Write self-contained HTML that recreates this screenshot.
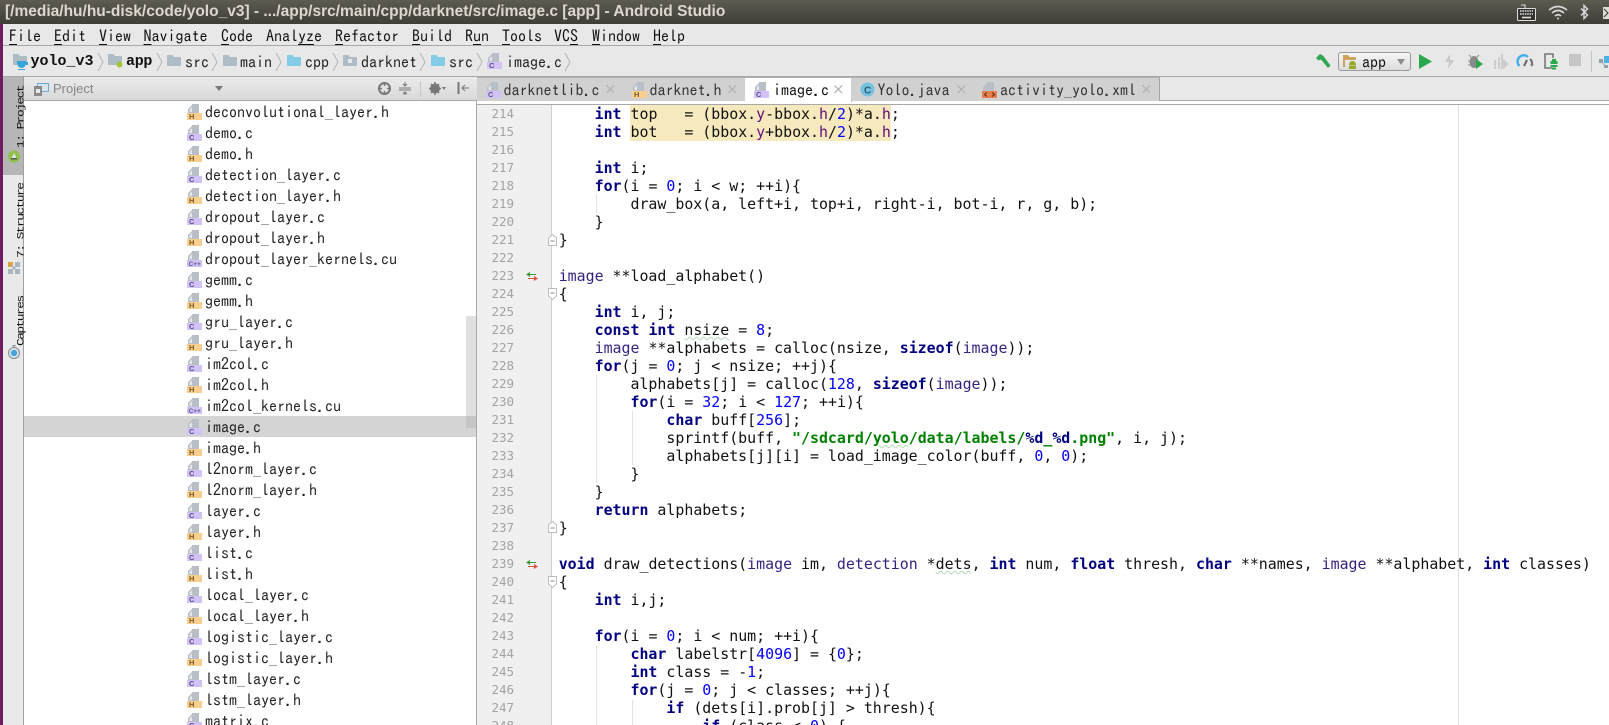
<!DOCTYPE html>
<html><head><meta charset="utf-8"><style>
html,body{margin:0;padding:0;width:1609px;height:725px;overflow:hidden;background:#fff}
body{position:relative;font-family:"IPAGothic","Liberation Mono",monospace;font-size:16px;color:#000}
.a,.a *{box-sizing:border-box}
.a{position:absolute}
.t{position:absolute;white-space:pre;line-height:20px;width:auto;letter-spacing:0}
.m{position:absolute;top:26px;line-height:20px;white-space:pre;font-size:16px;color:#111}
.m u{text-underline-offset:2px}
.b{position:absolute;top:51px;line-height:22px;white-space:pre;font-size:16px;color:#222}
svg{position:absolute;overflow:visible}
.tab{position:absolute;top:77px;height:23px;background:#d1d1d1;border-right:1px solid #a5a5a5;border-top:1px solid #b0b0b0}
.tt{position:absolute;top:80px;line-height:20px;white-space:pre;font-size:16px;color:#333}
.x{position:absolute;top:81px;font:15px/16px "DejaVu Sans",sans-serif;color:#b4b4b4}
#tree{position:absolute;left:24px;top:101px;width:452px;height:624px;overflow:hidden}
.r{position:absolute;left:181px;height:21px;line-height:23px;white-space:pre;font-size:16px;color:#222}
pre{margin:0;position:absolute;font-family:"DejaVu Sans Mono",monospace;line-height:18px}
#code{left:558.7px;top:105px;font-size:14.92px;color:#111;width:1040px;height:620px;overflow:hidden}
#nums{left:491.5px;top:105px;font-size:12.5px;color:#a3a3a3;height:620px;overflow:hidden}
b{color:#000080;font-weight:bold}
i{font-style:normal;color:#371f80}
em{font-style:normal;color:#660e7a}
s{text-decoration:none;color:#0000ff}
q{quotes:none;color:#008000;font-weight:bold}
q b{color:#000080}
.w{text-decoration:underline wavy #b6d8b6 1px;text-underline-offset:1px}
.g{position:absolute;width:1px;background:#e2e2e2}
.v{position:absolute;white-space:pre;font:13px/10px "Liberation Mono",monospace;letter-spacing:-1.6px;color:#111;transform-origin:0 0;transform:rotate(-90deg) scaleY(.8)}
</style></head><body>
<svg width="0" height="0" style="left:0;top:0">
<defs>
<symbol id="h" viewBox="0 0 15 16"><path d="M1 9V5L5 1V0H12V9z" fill="#b8bfc7"/><path d="M2.500 8V5.500L5 3V8z" fill="#e4e6e9"/><rect x="0" y="9" width="15" height="7" fill="#f9cf8e"/><text x="2" y="15" font-family="Liberation Sans" font-weight="bold" font-size="7.500" fill="#7a5a28">H</text></symbol>
<symbol id="c" viewBox="0 0 15 16"><path d="M1 9V5L5 1V0H12V9z" fill="#b8bfc7"/><path d="M2.500 8V5.500L5 3V8z" fill="#e4e6e9"/><rect x="0" y="9" width="15" height="7" fill="#d3c2f6"/><text x="2" y="15" font-family="Liberation Sans" font-weight="bold" font-size="7.500" fill="#5d5088">C</text></symbol>
<symbol id="p" viewBox="0 0 15 16"><path d="M1 9V5L5 1V0H12V9z" fill="#b8bfc7"/><path d="M2.500 8V5.500L5 3V8z" fill="#e4e6e9"/><rect x="0" y="9" width="15" height="7" fill="#d3c2f6"/><text x="1.500" y="15" font-family="Liberation Sans" font-weight="bold" font-size="6.500" fill="#5d5088">C++</text></symbol>
<symbol id="f" viewBox="0 0 14 11"><path d="M0 0H5.500L7 2H14V11H0z"/></symbol>
<symbol id="ov" viewBox="0 0 12 9"><path d="M4 0L0 2.500L4 5V3H10V2H4z" fill="#3a9a3f"/><path d="M8 4L12 6.500L8 9V7H2V6H8z" fill="#d9543f"/></symbol>
</defs></svg>

<!-- title bar -->
<div class="a" style="left:0;top:0;width:1609px;height:24px;background:linear-gradient(#5e5b50,#3e3d37)"></div>
<div class="t" style="left:5px;top:2px;font:bold 15.5px/20px 'Liberation Sans',sans-serif;color:#dcd8cf">[/media/hu/hu-disk/code/yolo_v3] - .../app/src/main/cpp/darknet/src/image.c [app] - Android Studio</div>
<svg style="left:1517px;top:3px" width="19" height="19" viewBox="0 0 19 19"><path d="M8 5V2H4" fill="none" stroke="#ddd" stroke-width="1"/><rect x=".5" y="5.500" width="18" height="12" rx="1" fill="#35342f" stroke="#ddd"/><path d="M3 8h13M3 11h13" stroke="#ddd" stroke-width="1.600" stroke-dasharray="1.600 .8"/><path d="M5 14.500h9" stroke="#ddd" stroke-width="1.600"/></svg>
<svg style="left:1548px;top:5px" width="20" height="15" viewBox="0 0 20 15" fill="none" stroke="#d8d8d8" stroke-width="1.600"><path d="M1 5Q10 -2 19 5"/><path d="M4 8Q10 3 16 8"/><path d="M7 11Q10 8.500 13 11"/><circle cx="10" cy="13.500" r="1" fill="#d8d8d8" stroke="none"/></svg>
<svg style="left:1580px;top:4px" width="9" height="16" viewBox="0 0 9 16" fill="none" stroke="#dcdcdc" stroke-width="1.400"><path d="M1 4.500L7.500 11L4 14.500V1.500L7.500 5L1 11.500"/></svg>
<div class="a" style="left:1603px;top:7px;width:6px;height:12px;background:#e0ddd5"></div>
<svg style="left:1603px;top:7px" width="6" height="12"><path d="M1 2L5 6L1 10" fill="none" stroke="#333"/></svg>

<!-- menu -->
<div class="a" style="left:0;top:24px;width:1609px;height:22px;background:#e8e8e8;border-bottom:1px solid #a8a8a8"></div>
<div class="a" style="left:0;top:24px;width:3px;height:701px;background:#6d1b62"></div>
<div class="m" style="left:9px"><u>F</u>ile</div>
<div class="m" style="left:54px"><u>E</u>dit</div>
<div class="m" style="left:99px"><u>V</u>iew</div>
<div class="m" style="left:143.500px"><u>N</u>avigate</div>
<div class="m" style="left:221px"><u>C</u>ode</div>
<div class="m" style="left:266px">Anal<u>y</u><u>z</u>e</div>
<div class="m" style="left:335px"><u>R</u>efactor</div>
<div class="m" style="left:412px"><u>B</u>uild</div>
<div class="m" style="left:465px">R<u>u</u>n</div>
<div class="m" style="left:502px"><u>T</u>ools</div>
<div class="m" style="left:554px">VC<u>S</u></div>
<div class="m" style="left:592px"><u>W</u>indow</div>
<div class="m" style="left:653px"><u>H</u>elp</div>

<!-- breadcrumb -->
<div class="a" style="left:3px;top:46px;width:1606px;height:31px;background:#e8e8e8;border-bottom:1px solid #a8a8a8"></div>
<svg style="left:13px;top:54px" width="14" height="11"><use href="#f" width="14" height="11" fill="#aebcc6"/></svg>
<svg style="left:17px;top:61px" width="11" height="9" viewBox="0 0 11 9"><path d="M0 0H9V1H11V4H8.500Q7.500 7 4.500 7T0 3z M1 8H8V9H1z" fill="#3aa5d8"/></svg>
<div class="b" style="left:30.500px;font:bold 15px/22px 'Liberation Mono',monospace;color:#111">yolo_v3</div>
<svg style="left:97px;top:52px" width="7" height="20" fill="none" stroke="#b4b4b4"><path d="M1 1L6 10L1 19"/></svg>
<svg style="left:108px;top:54px" width="14" height="11"><use href="#f" width="14" height="11" fill="#aebcc6"/></svg>
<svg style="left:116px;top:61px" width="7" height="7"><circle cx="3.500" cy="3.500" r="3" fill="#a5c63a"/></svg>
<div class="b" style="left:126px;font:bold 15px/22px 'Liberation Mono',monospace;color:#111;letter-spacing:-.3px">app</div>
<svg style="left:156px;top:52px" width="7" height="20" fill="none" stroke="#b4b4b4"><path d="M1 1L6 10L1 19"/></svg>
<svg style="left:167px;top:55px" width="14" height="11"><use href="#f" width="14" height="11" fill="#aebcc6"/></svg>
<div class="b" style="left:185px">src</div>
<svg style="left:211px;top:52px" width="7" height="20" fill="none" stroke="#b4b4b4"><path d="M1 1L6 10L1 19"/></svg>
<svg style="left:223px;top:55px" width="14" height="11"><use href="#f" width="14" height="11" fill="#aebcc6"/></svg>
<div class="b" style="left:240px">main</div>
<svg style="left:275px;top:52px" width="7" height="20" fill="none" stroke="#b4b4b4"><path d="M1 1L6 10L1 19"/></svg>
<svg style="left:287px;top:55px" width="14" height="11"><use href="#f" width="14" height="11" fill="#84cbe6"/></svg>
<div class="b" style="left:305px">cpp</div>
<svg style="left:332px;top:52px" width="7" height="20" fill="none" stroke="#b4b4b4"><path d="M1 1L6 10L1 19"/></svg>
<svg style="left:343px;top:55px" width="14" height="11"><use href="#f" width="14" height="11" fill="#aebcc6"/><rect x="5" y="4" width="4" height="4" fill="#e8e8e8"/></svg>
<div class="b" style="left:361px">darknet</div>
<svg style="left:419px;top:52px" width="7" height="20" fill="none" stroke="#b4b4b4"><path d="M1 1L6 10L1 19"/></svg>
<svg style="left:431px;top:55px" width="14" height="11"><use href="#f" width="14" height="11" fill="#84cbe6"/></svg>
<div class="b" style="left:449px">src</div>
<svg style="left:476px;top:52px" width="7" height="20" fill="none" stroke="#b4b4b4"><path d="M1 1L6 10L1 19"/></svg>
<svg style="left:487px;top:53px" width="15" height="16"><use href="#c" width="15" height="16"/></svg>
<div class="b" style="left:506px">image.c</div>
<svg style="left:564px;top:52px" width="7" height="20" fill="none" stroke="#b4b4b4"><path d="M1 1L6 10L1 19"/></svg>

<!-- run toolbar -->
<svg style="left:1316px;top:54px" width="15" height="15" viewBox="0 0 15 15"><path d="M0 4L4 0L7 1.500L14.500 11.500L12 14L5 5.500L2.500 6.500z" fill="#2fa84f"/></svg>
<div class="a" style="left:1338px;top:52px;width:73px;height:19px;border:1px solid #9a9a9a;border-radius:3px;background:linear-gradient(#f6f6f6,#dcdcdc)"></div>
<svg style="left:1343px;top:55px" width="17" height="14" viewBox="0 0 17 14"><path d="M0 0H5L6.500 2H13V5H2V12H0z" fill="#d2a15e"/><path d="M6 9.500a3.500 3.500 0 0 1 7 0V10H6z M6 10.500h7V14H6z" fill="#98a72a"/></svg>
<div class="b" style="left:1362px;top:51px;color:#111">app</div>
<svg style="left:1396px;top:59px" width="10" height="6"><path d="M1 0H9L5 6z" fill="#8c8c8c"/></svg>
<svg style="left:1419px;top:54px" width="13" height="15"><path d="M0 0L13 7.500L0 15z" fill="#2aa84e"/></svg>
<svg style="left:1445px;top:54px" width="9" height="15"><path d="M5 0L0 8H4L3 15L9 6H5z" fill="#c8c8c8"/></svg>
<svg style="left:1468px;top:54px" width="15" height="15" viewBox="0 0 15 15"><path d="M3 3L1 1M9 3L11 1M0 7H2M0 11H2" stroke="#8a8a8a" fill="none"/><ellipse cx="6" cy="8" rx="4.500" ry="6" fill="#8a8a8a"/><path d="M8 5L15 10L8 15z" fill="#2aa84e"/></svg>
<svg style="left:1494px;top:54px" width="15" height="15"><path d="M0 6H2V15H0zM4 3H6V15H4zM7 0H9V15H7z" fill="#cdcdcd"/><path d="M9 5L15 10L9 15z" fill="#cdcdcd"/></svg>
<svg style="left:1518px;top:55px" width="15" height="12" fill="none"><path d="M1.500 11A6 6 0 0 1 10 2" stroke="#45aee8" stroke-width="2.400"/><path d="M12 4A6 6 0 0 1 13.500 11" stroke="#777" stroke-width="2.400"/><path d="M6 11L9 5" stroke="#666" stroke-width="2"/></svg>
<svg style="left:1544px;top:53px" width="14" height="17" fill="none"><path d="M8 15H1V1H9V5" stroke="#777" stroke-width="1.600"/><path d="M6.500 8h7v3h-7zM6.500 12h7v2h-7zM8 14.500h4v2H8zM8 6h4v2H8z" fill="#2aa84e"/></svg>
<div class="a" style="left:1569px;top:54px;width:12px;height:12px;background:#c6c6c6"></div>
<div class="a" style="left:1591px;top:51px;width:1px;height:21px;background:#c4c4c4"></div>
<svg style="left:1599px;top:55px" width="10" height="13"><path d="M0 4H4V8H0z" fill="#8ea2ad"/><path d="M5 1H10V8H5z" fill="#4db3e6"/><path d="M5 10H9V13H5z" fill="#8ea2ad"/><path d="M3 7L6 11" stroke="#8ea2ad"/></svg>

<!-- left strip -->
<div class="a" style="left:3px;top:77px;width:21px;height:648px;background:#e9e9e9;border-right:1px solid #a0a0a0"></div>
<div class="a" style="left:3px;top:77px;width:20px;height:98px;background:#b6b6b6"></div>
<div class="v" style="left:17px;top:148px">1: Project</div>
<div class="v" style="left:17px;top:258px">7: Structure</div>
<div class="v" style="left:17px;top:346px">Captures</div>
<svg style="left:8px;top:150px" width="12" height="13" viewBox="0 0 12 13"><circle cx="6" cy="6.500" r="6" fill="#8fc04a"/><path d="M3 9L6 3L9 9z" fill="#e4e4e4"/><rect x="3" y="8" width="6" height="1.500" fill="#555"/></svg>
<svg style="left:8px;top:262px" width="12" height="12" viewBox="0 0 12 12"><rect width="5" height="5" fill="#e0a23c"/><rect x="7" width="5" height="5" fill="#aab5bd"/><rect y="7" width="5" height="5" fill="#aab5bd"/><rect x="7" y="7" width="5" height="5" fill="#aab5bd"/><path d="M3 3L9 9M9 3L3 9" stroke="#aab5bd" stroke-width="1.500"/></svg>
<svg style="left:8px;top:345px" width="12" height="14" viewBox="0 0 12 14"><circle cx="6" cy="8" r="5.500" fill="#dde8ee" stroke="#888"/><circle cx="6" cy="8" r="3.200" fill="#4aa3d8"/><path d="M4.500 0H7.500V1.500H4.500z" fill="#888"/></svg>

<!-- project header -->
<div class="a" style="left:24px;top:77px;width:453px;height:24px;background:linear-gradient(#ebebeb,#d9d9d9);border-bottom:1px solid #a8a8a8"></div>
<svg style="left:34px;top:83px" width="15" height="13" viewBox="0 0 15 13"><rect x="3.500" y=".5" width="11" height="8" fill="#d5e6f1" stroke="#6ea9cf"/><rect x="0" y="3" width="8" height="10" fill="#8a8a8a"/><rect x="2" y="6" width="4" height="4" fill="#e8e8e8"/></svg>
<div class="t" style="left:53px;top:79px;color:#858585;font:13px/20px 'Liberation Sans',sans-serif">Project</div>
<svg style="left:215px;top:86px" width="8" height="5"><path d="M0 0H8L4 5z" fill="#777"/></svg>
<svg style="left:378px;top:82px" width="13" height="13" viewBox="0 0 13 13"><circle cx="6.500" cy="6.500" r="5.500" fill="none" stroke="#777" stroke-width="2"/><path d="M6.500 0V4M6.500 9V13M0 6.500H4M9 6.500H13" stroke="#777" stroke-width="1.500"/></svg>
<svg style="left:399px;top:82px" width="12" height="13" stroke="#777" fill="none"><path d="M0 6H12M0 8H12M6 0V4M4 2L6 4L8 2M6 13V10M4 12L6 10L8 12"/></svg>
<div class="a" style="left:420px;top:81px;width:1px;height:16px;background:#c8c8c8"></div>
<svg style="left:429px;top:82px" width="17" height="13" viewBox="0 0 17 13"><circle cx="6" cy="6.500" r="3.500" fill="none" stroke="#777" stroke-width="3"/><path d="M6 0V13M0 6.500H12M2 2L10 11M10 2L2 11" stroke="#777" stroke-width="1.500"/><path d="M13 5H17L15 8z" fill="#777"/></svg>
<svg style="left:457px;top:82px" width="12" height="13" stroke="#777" fill="none"><path d="M1 0V12M2 0V12M12 6H5M8 3L5 6L8 9"/></svg>

<!-- tabs -->
<div class="a" style="left:477px;top:77px;width:1132px;height:24px;background:#e8e8e8;border-bottom:1px solid #a8a8a8"></div>
<div class="tab" style="left:477px;width:146px"></div>
<div class="tab" style="left:623px;width:122px"></div>
<div class="tab" style="left:745px;width:106px;background:#fff;height:24px"></div>
<div class="tab" style="left:851px;width:122px"></div>
<div class="tab" style="left:973px;width:186px"></div>
<svg style="left:486px;top:82px" width="15" height="16"><use href="#c" width="15" height="16"/></svg>
<div class="tt" style="left:503.500px">darknetlib.c</div><div class="x" style="left:604px">×</div>
<svg style="left:632px;top:82px" width="15" height="16"><use href="#h" width="15" height="16"/></svg>
<div class="tt" style="left:649.500px">darknet.h</div><div class="x" style="left:726px">×</div>
<svg style="left:754px;top:82px" width="15" height="16"><use href="#c" width="15" height="16"/></svg>
<div class="tt" style="left:773px;color:#111">image.c</div><div class="x" style="left:832px">×</div>
<svg style="left:860px;top:82px" width="15" height="15"><circle cx="7.500" cy="7.500" r="7" fill="#76c1e0"/><text x="4" y="11.500" font-family="Liberation Sans" font-weight="bold" font-size="10" fill="#2b5d75">C</text></svg>
<div class="tt" style="left:877.500px">Yolo.java</div><div class="x" style="left:955px">×</div>
<svg style="left:982px;top:82px" width="15" height="16" viewBox="0 0 15 16"><path d="M1 9V5L5 1V0H12V9z" fill="#b8bfc7"/><rect y="9" width="15" height="7" fill="#e67f4d"/><path d="M5 10.500L2.500 12.500L5 14.500M10 10.500L12.500 12.500L10 14.500" stroke="#5a2a10" fill="none"/></svg>
<div class="tt" style="left:1000px">activity_yolo.xml</div><div class="x" style="left:1140px">×</div>

<!-- tree -->
<div class="a" style="left:466px;top:316px;width:10px;height:112px;background:#e0e0e0"></div>
<div class="a" style="left:24px;top:416px;width:452px;height:21px;background:#d4d4d4"></div>
<div class="a" style="left:466px;top:416px;width:10px;height:12px;background:#c6c6c6"></div>
<div class="a" style="left:476px;top:101px;width:1px;height:624px;background:#a8a8a8"></div>
<div id="tree">
<svg style="left:163px;top:3px" width="15" height="16"><use href="#h" width="15" height="16"/></svg><div class="r" style="top:0">deconvolutional_layer.h</div>
<svg style="left:163px;top:24px" width="15" height="16"><use href="#c" width="15" height="16"/></svg><div class="r" style="top:21px">demo.c</div>
<svg style="left:163px;top:45px" width="15" height="16"><use href="#h" width="15" height="16"/></svg><div class="r" style="top:42px">demo.h</div>
<svg style="left:163px;top:66px" width="15" height="16"><use href="#c" width="15" height="16"/></svg><div class="r" style="top:63px">detection_layer.c</div>
<svg style="left:163px;top:87px" width="15" height="16"><use href="#h" width="15" height="16"/></svg><div class="r" style="top:84px">detection_layer.h</div>
<svg style="left:163px;top:108px" width="15" height="16"><use href="#c" width="15" height="16"/></svg><div class="r" style="top:105px">dropout_layer.c</div>
<svg style="left:163px;top:129px" width="15" height="16"><use href="#h" width="15" height="16"/></svg><div class="r" style="top:126px">dropout_layer.h</div>
<svg style="left:163px;top:150px" width="15" height="16"><use href="#p" width="15" height="16"/></svg><div class="r" style="top:147px">dropout_layer_kernels.cu</div>
<svg style="left:163px;top:171px" width="15" height="16"><use href="#c" width="15" height="16"/></svg><div class="r" style="top:168px">gemm.c</div>
<svg style="left:163px;top:192px" width="15" height="16"><use href="#h" width="15" height="16"/></svg><div class="r" style="top:189px">gemm.h</div>
<svg style="left:163px;top:213px" width="15" height="16"><use href="#c" width="15" height="16"/></svg><div class="r" style="top:210px">gru_layer.c</div>
<svg style="left:163px;top:234px" width="15" height="16"><use href="#h" width="15" height="16"/></svg><div class="r" style="top:231px">gru_layer.h</div>
<svg style="left:163px;top:255px" width="15" height="16"><use href="#c" width="15" height="16"/></svg><div class="r" style="top:252px">im2col.c</div>
<svg style="left:163px;top:276px" width="15" height="16"><use href="#h" width="15" height="16"/></svg><div class="r" style="top:273px">im2col.h</div>
<svg style="left:163px;top:297px" width="15" height="16"><use href="#p" width="15" height="16"/></svg><div class="r" style="top:294px">im2col_kernels.cu</div>
<svg style="left:163px;top:318px" width="15" height="16"><use href="#c" width="15" height="16"/></svg><div class="r" style="top:315px">image.c</div>
<svg style="left:163px;top:339px" width="15" height="16"><use href="#h" width="15" height="16"/></svg><div class="r" style="top:336px">image.h</div>
<svg style="left:163px;top:360px" width="15" height="16"><use href="#c" width="15" height="16"/></svg><div class="r" style="top:357px">l2norm_layer.c</div>
<svg style="left:163px;top:381px" width="15" height="16"><use href="#h" width="15" height="16"/></svg><div class="r" style="top:378px">l2norm_layer.h</div>
<svg style="left:163px;top:402px" width="15" height="16"><use href="#c" width="15" height="16"/></svg><div class="r" style="top:399px">layer.c</div>
<svg style="left:163px;top:423px" width="15" height="16"><use href="#h" width="15" height="16"/></svg><div class="r" style="top:420px">layer.h</div>
<svg style="left:163px;top:444px" width="15" height="16"><use href="#c" width="15" height="16"/></svg><div class="r" style="top:441px">list.c</div>
<svg style="left:163px;top:465px" width="15" height="16"><use href="#h" width="15" height="16"/></svg><div class="r" style="top:462px">list.h</div>
<svg style="left:163px;top:486px" width="15" height="16"><use href="#c" width="15" height="16"/></svg><div class="r" style="top:483px">local_layer.c</div>
<svg style="left:163px;top:507px" width="15" height="16"><use href="#h" width="15" height="16"/></svg><div class="r" style="top:504px">local_layer.h</div>
<svg style="left:163px;top:528px" width="15" height="16"><use href="#c" width="15" height="16"/></svg><div class="r" style="top:525px">logistic_layer.c</div>
<svg style="left:163px;top:549px" width="15" height="16"><use href="#h" width="15" height="16"/></svg><div class="r" style="top:546px">logistic_layer.h</div>
<svg style="left:163px;top:570px" width="15" height="16"><use href="#c" width="15" height="16"/></svg><div class="r" style="top:567px">lstm_layer.c</div>
<svg style="left:163px;top:591px" width="15" height="16"><use href="#h" width="15" height="16"/></svg><div class="r" style="top:588px">lstm_layer.h</div>
<svg style="left:163px;top:612px" width="15" height="16"><use href="#c" width="15" height="16"/></svg><div class="r" style="top:609px">matrix.c</div>
</div>

<!-- editor -->
<div class="a" style="left:477px;top:104px;width:1132px;height:1px;background:#a8a8a8"></div>
<div class="a" style="left:477px;top:105px;width:75px;height:620px;background:#f0f0f0;border-right:1px solid #d0d0d0"></div>
<div class="a" style="left:1458px;top:105px;width:1px;height:620px;background:#e2e2e2"></div>
<div class="a" style="left:630px;top:105px;width:261px;height:36px;background:#f5e9bd"></div>
<div class="g" style="left:596px;top:195px;height:18px"></div>
<div class="g" style="left:596px;top:375px;height:108px"></div>
<div class="g" style="left:632px;top:411px;height:54px"></div>
<div class="g" style="left:596px;top:646px;height:79px"></div>
<div class="g" style="left:632px;top:700px;height:25px"></div>
<pre id="nums">214
215
216
217
218
219
220
221
222
223
224
225
226
227
228
229
230
231
232
233
234
235
236
237
238
239
240
241
242
243
244
245
246
247
248</pre>
<svg style="left:526px;top:272px" width="12" height="9"><use href="#ov" width="12" height="9"/></svg>
<svg style="left:526px;top:560px" width="12" height="9"><use href="#ov" width="12" height="9"/></svg>
<svg style="left:548px;top:234px" width="9" height="12" fill="#fff" stroke="#bdbdbd"><path d="M.5 11.500V4L4.500 .5L8.500 4V11.500z"/><path d="M2.500 7H6.500" stroke="#888"/></svg>
<svg style="left:548px;top:288px" width="9" height="12" fill="#fff" stroke="#bdbdbd"><path d="M.5 .5V8L4.500 11.500L8.500 8V.5z"/><path d="M2.500 5H6.500" stroke="#888"/></svg>
<svg style="left:548px;top:521px" width="9" height="12" fill="#fff" stroke="#bdbdbd"><path d="M.5 11.500V4L4.500 .5L8.500 4V11.500z"/><path d="M2.500 7H6.500" stroke="#888"/></svg>
<svg style="left:548px;top:576px" width="9" height="12" fill="#fff" stroke="#bdbdbd"><path d="M.5 .5V8L4.500 11.500L8.500 8V.5z"/><path d="M2.500 5H6.500" stroke="#888"/></svg>
<pre id="code">    <b>int</b> top   = (bbox.<em>y</em>-bbox.<em>h</em>/<s>2</s>)*a.<em>h</em>;
    <b>int</b> bot   = (bbox.<em>y</em>+bbox.<em>h</em>/<s>2</s>)*a.<em>h</em>;

    <b>int</b> i;
    <b>for</b>(i = <s>0</s>; i &lt; w; ++i){
        draw_box(a, left+i, top+i, right-i, bot-i, r, g, b);
    }
}

<i>image</i> **load_alphabet()
{
    <b>int</b> i, j;
    <b>const int</b> <span class="w">nsize</span> = <s>8</s>;
    <i>image</i> **alphabets = calloc(nsize, <b>sizeof</b>(<i>image</i>));
    <b>for</b>(j = <s>0</s>; j &lt; nsize; ++j){
        alphabets[j] = calloc(<s>128</s>, <b>sizeof</b>(<i>image</i>));
        <b>for</b>(i = <s>32</s>; i &lt; <s>127</s>; ++i){
            <b>char</b> buff[<s>256</s>];
            sprintf(buff, <q>"/sdcard/<span class="w">yolo</span>/data/labels/<b>%d</b>_<b>%d</b>.png"</q>, i, j);
            alphabets[j][i] = load_image_color(buff, <s>0</s>, <s>0</s>);
        }
    }
    <b>return</b> alphabets;
}

<b>void</b> draw_detections(<i>image</i> im, <i>detection</i> *<span class="w">dets</span>, <b>int</b> num, <b>float</b> thresh, <b>char</b> **names, <i>image</i> **alphabet, <b>int</b> classes)
{
    <b>int</b> i,j;

    <b>for</b>(i = <s>0</s>; i &lt; num; ++i){
        <b>char</b> labelstr[<s>4096</s>] = {<s>0</s>};
        <b>int</b> class = -<s>1</s>;
        <b>for</b>(j = <s>0</s>; j &lt; classes; ++j){
            <b>if</b> (dets[i].prob[j] &gt; thresh){
                <b>if</b> (class &lt; <s>0</s>) {</pre>
</body></html>
